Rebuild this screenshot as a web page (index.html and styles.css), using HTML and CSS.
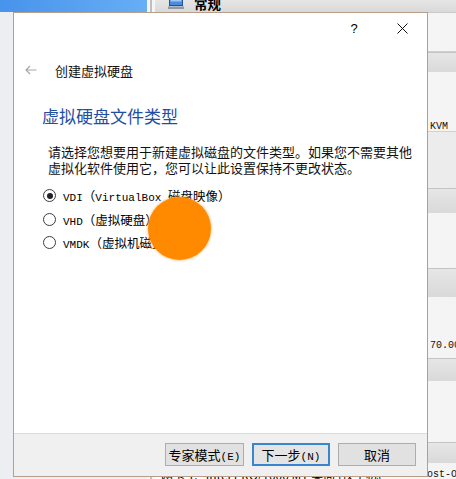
FILE: index.html
```html
<!DOCTYPE html>
<html lang="zh-CN">

<head>
  <meta charset="UTF-8">
  <meta name="viewport" content="width=device-width, initial-scale=1.0">
  <title>创建虚拟硬盘</title>
  <link rel="stylesheet" href="styles.css">
</head>

<body>
  <!-- main VirtualBox window behind the wizard -->
  <div class="desktop">
    <div class="vm-list">
      <div class="vm-item selected"></div>
    </div>
    <div class="splitter"></div>
    <div class="details">
      <div class="sec-head first">
        <svg class="sec-icon" width="16" height="11" viewBox="0 0 16 11">
          <rect x="1.5" y="0.5" width="13" height="7" fill="#4a8be0" stroke="#1f4f9c" />
          <rect x="2.5" y="1.5" width="11" height="2" fill="#9cc6f5" />
          <rect x="0" y="8.5" width="16" height="2.5" fill="#8d98a6" />
        </svg>
        <span>常规</span>
      </div>
      <div class="sec-body general"></div>
      <div class="sec-head system"></div>
      <div class="sec-body system-body">
        <div class="detail-row"><span class="detail-label"></span><span class="detail-value">KVM</span></div>
      </div>
      <div class="sec-body preview"></div>
      <div class="sec-head display"></div>
      <div class="sec-body display-body"></div>
      <div class="sec-head storage"></div>
      <div class="sec-body storage-body">
        <div class="detail-row"><span class="detail-label"></span><span class="detail-value">70.00 GB</span></div>
      </div>
      <div class="sec-head audio"></div>
      <div class="sec-body audio-body"></div>
      <div class="sec-head network"></div>
      <div class="sec-body network-body">
        <div class="detail-row"><span class="detail-label">网卡 1:&nbsp;&nbsp;&nbsp;Intel PRO/1000 MT 桌面 (仅主机(</span><span class="detail-value">Host-Only</span></div>
      </div>
    </div>
  </div>

  <!-- create virtual hard disk wizard -->
  <div class="dialog">
    <div class="titlebar">
      <div class="cap-btn help">?</div>
      <div class="cap-btn close">
        <svg width="11" height="11" viewBox="0 0 11 11">
          <path d="M0.5 0.5 L10.5 10.5 M10.5 0.5 L0.5 10.5" stroke="#111" stroke-width="1" fill="none" />
        </svg>
      </div>
    </div>

    <div class="wizard-head">
      <svg class="back-arrow" width="12" height="10" viewBox="0 0 12 10">
        <path d="M11.5 5 H1 M5 1 L1 5 L5 9" stroke="#a8a8a8" stroke-width="1.2" fill="none" />
      </svg>
      <span class="wizard-title">创建虚拟硬盘</span>
    </div>

    <div class="page">
      <div class="page-title">虚拟硬盘文件类型</div>
      <div class="page-desc">请选择您想要用于新建虚拟磁盘的文件类型。如果您不需要其他<br>虚拟化软件使用它，您可以让此设置保持不更改状态。</div>

      <div class="radio-list">
        <div class="radio-row">
          <span class="radio checked"></span>
          <span class="radio-label"><span class="lat">VDI</span>（<span class="lat">VirtualBox </span>磁盘映像）</span>
        </div>
        <div class="radio-row">
          <span class="radio"></span>
          <span class="radio-label"><span class="lat">VHD</span>（虚拟硬盘）</span>
        </div>
        <div class="radio-row">
          <span class="radio"></span>
          <span class="radio-label"><span class="lat">VMDK</span>（虚拟机磁盘）</span>
        </div>
      </div>
    </div>

    <div class="footer">
      <button class="btn expert">专家模式<span class="lat">(E)</span></button>
      <button class="btn default">下一步<span class="lat">(N)</span></button>
      <button class="btn">取消</button>
    </div>
  </div>

  <!-- click highlight from the screen recorder -->
  <div class="click-dot"></div>
</body>

</html>
```

FILE: styles.css
```css
* {
  box-sizing: border-box;
}

body {
  margin: 0;
  width: 456px;
  height: 479px;
  overflow: hidden;
  position: relative;
  background: #fff;
  font-family: "Noto Sans CJK SC", sans-serif;
  font-size: 12px;
  color: #000;
}

.lat {
  font-family: "Liberation Mono", monospace;
  font-size: 11px;
}

/* background window */

.desktop {
  display: flex;
  height: 479px;
}

.vm-list {
  width: 147px;
  flex: none;
  background: #eceef1;
}

.vm-item.selected {
  height: 12px;
  background: linear-gradient(90deg, #4893ec 0%, #67aef5 100%);
}

.splitter {
  width: 8px;
  flex: none;
  background: linear-gradient(90deg, #f5f5f5 3px, #bfbfbf 3px, #bfbfbf 5px, #f5f5f5 5px);
}

.details {
  flex: 1;
  min-width: 0;
  display: flex;
  flex-direction: column;
  background: #fbfbfb;
}

.sec-head {
  flex: none;
  background: linear-gradient(180deg, #e6e6e6 0%, #d9d9d9 100%);
  border-top: 1px solid #c4c4c4;
}

.sec-head.first {
  height: 13px;
  border-top: none;
  border-bottom: 1px solid #c9c9c9;
  display: flex;
  align-items: flex-end;
  gap: 10px;
  padding-left: 13px;
  font-size: 13.5px;
  font-weight: bold;
  line-height: 17px;
}

.sec-icon {
  margin-bottom: 3px;
}

.sec-body {
  flex: none;
  background: linear-gradient(90deg, #fdfdfd 60%, #f3f3f3 100%);
}

.general {
  height: 39px;
  border-bottom: 1px solid #cfcfcf;
}

.system {
  height: 20px;
}

.system-body {
  height: 60px;
  padding-top: 48px;
  border-bottom: 1px solid #d2d2d2;
}

.preview {
  height: 56px;
  background: linear-gradient(90deg, #f4f4f4 50%, #ebebeb 100%);
}

.display {
  height: 25px;
}

.display-body {
  height: 55px;
}

.storage {
  height: 29px;
}

.storage-body {
  height: 61px;
  padding-top: 42px;
}

.audio {
  height: 23px;
}

.audio-body {
  height: 61px;
}

.network {
  height: 21px;
}

.network-body {
  flex: 1;
  padding-top: 5px;
}

.detail-row {
  display: flex;
  height: 13px;
  line-height: 13px;
  white-space: nowrap;
}

.detail-label {
  width: 275px;
  flex: none;
  overflow: hidden;
  padding-left: 6px;
}

.network-body .detail-label {
  width: 266px;
}

.detail-value {
  font-family: "Liberation Mono", monospace;
  font-size: 10px;
  color: #111;
}

/* wizard dialog */

.dialog {
  position: absolute;
  left: 13px;
  top: 12px;
  width: 415px;
  height: 465px;
  background: #fff;
  border: 1px solid #b89e89;
  display: flex;
  flex-direction: column;
}

.titlebar {
  height: 30px;
  flex: none;
  display: flex;
  justify-content: flex-end;
}

.cap-btn {
  width: 46px;
  display: flex;
  align-items: center;
  justify-content: center;
  margin-right: 2px;
}

.help {
  font-family: "Liberation Sans", sans-serif;
  font-size: 13px;
}

.wizard-head {
  height: 28px;
  margin-top: 13px;
  display: flex;
  align-items: center;
  padding-left: 11px;
  gap: 18px;
}

.wizard-title {
  font-size: 13px;
  color: #111;
}

.page {
  padding-left: 28px;
}

.page-title {
  margin-top: 21px;
  font-size: 17px;
  line-height: 22px;
  color: #1f4ea3;
}

.page-desc {
  margin-top: 17px;
  padding-left: 6px;
  font-size: 13px;
  line-height: 16px;
  white-space: nowrap;
  color: #111;
}

.radio-list {
  margin-top: 8px;
  padding-left: 1px;
}

.radio-row {
  height: 23.5px;
  display: flex;
  align-items: center;
  gap: 7px;
}

.radio {
  width: 13px;
  height: 13px;
  border: 1px solid #3c3c3c;
  border-radius: 50%;
  display: flex;
  align-items: center;
  justify-content: center;
  background: #fff;
}

.radio.checked::after {
  content: "";
  width: 6px;
  height: 6px;
  border-radius: 50%;
  background: #222;
}

.radio-label {
  font-size: 12.5px;
  white-space: nowrap;
}

.footer {
  margin-top: auto;
  height: 43px;
  flex: none;
  border-top: 1px solid #dcdcdc;
  background: #f0f0f0;
  display: flex;
  justify-content: flex-end;
  align-items: flex-start;
  gap: 8px;
  padding: 9px 11px 0 0;
}

.btn {
  width: 78px;
  height: 23px;
  padding: 0;
  border: 1px solid #adadad;
  background: #e1e1e1;
  font-family: "Noto Sans CJK SC", sans-serif;
  font-size: 13px;
  color: #000;
  white-space: nowrap;
}

.btn.expert {
  width: 79px;
}

.btn.default {
  border: 2px solid #3a85cf;
  background: #e4e4e4;
}

.btn .lat {
  font-size: 11px;
}

/* recorder click highlight */

.click-dot {
  position: absolute;
  left: 148px;
  top: 197px;
  width: 63px;
  height: 63px;
  border-radius: 50%;
  background: #ff8a00;
  box-shadow: 0 0 2px 1px rgba(255, 170, 80, 0.5);
}
```
